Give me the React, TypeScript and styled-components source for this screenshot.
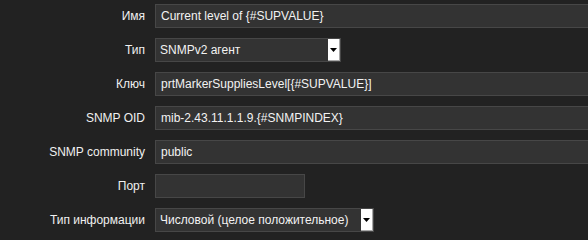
import React from 'react';
import styled, { createGlobalStyle } from 'styled-components';

const GlobalStyle = createGlobalStyle`
  html, body {
    margin: 0;
    padding: 0;
    background: #222222;
    overflow: hidden;
  }
  body {
    font-family: "Liberation Sans", Arial, sans-serif;
    font-size: 12px;
    color: #f0f0f0;
  }
`;

type Field =
  | { label: string; kind: 'text'; value: string; width?: number }
  | { label: string; kind: 'select'; value: string; width: number };

const fields: Field[] = [
  { label: 'Имя', kind: 'text', value: 'Current level of {#SUPVALUE}' },
  { label: 'Тип', kind: 'select', value: 'SNMPv2 агент', width: 186 },
  { label: 'Ключ', kind: 'text', value: 'prtMarkerSuppliesLevel[{#SUPVALUE}]' },
  { label: 'SNMP OID', kind: 'text', value: 'mib-2.43.11.1.1.9.{#SNMPINDEX}' },
  { label: 'SNMP community', kind: 'text', value: 'public' },
  { label: 'Порт', kind: 'text', value: '', width: 150 },
  { label: 'Тип информации', kind: 'select', value: 'Числовой (целое положительное)', width: 219 },
];

const App = () => {
  return (
    <>
      <GlobalStyle />
      <Form>
        {fields.map((f) => (
          <React.Fragment key={f.label}>
            <Label>{f.label}</Label>
            <Cell>
              {f.kind === 'text' ? (
                <TextBox $width={f.width}>{f.value}</TextBox>
              ) : (
                <SelectBox $width={f.width}>
                  <SelectValue>{f.value}</SelectValue>
                  <DropButton>
                    <svg width="7" height="4" viewBox="0 0 7 4">
                      <path d="M0 0h7L3.5 4z" fill="#000" />
                    </svg>
                  </DropButton>
                </SelectBox>
              )}
            </Cell>
          </React.Fragment>
        ))}
      </Form>
    </>
  );
};

const Form = styled.div`
  display: grid;
  grid-template-columns: 145px 1fr;
  column-gap: 10px;
  row-gap: 10px;
  padding-top: 4px;
  width: 660px;
`;

const Label = styled.div`
  display: flex;
  align-items: center;
  justify-content: flex-end;
  height: 24px;
  white-space: nowrap;
  color: #f0f0f0;
`;

const Cell = styled.div`
  display: flex;
  align-items: center;
`;

const TextBox = styled.div<{ $width?: number }>`
  box-sizing: border-box;
  width: ${(p) => (p.$width ? `${p.$width}px` : '100%')};
  height: 24px;
  padding: 0 5px;
  display: flex;
  align-items: center;
  background: #333333;
  border: 1px solid #474747;
  color: #f2f2f2;
  white-space: nowrap;
`;

const SelectBox = styled.div<{ $width: number }>`
  box-sizing: border-box;
  width: ${(p) => p.$width}px;
  height: 24px;
  display: flex;
  align-items: stretch;
  background: #333333;
  border: 1px solid #474747;
  color: #f2f2f2;
`;

const SelectValue = styled.div`
  flex: 1;
  display: flex;
  align-items: center;
  padding-left: 4px;
  white-space: nowrap;
  overflow: hidden;
`;

const DropButton = styled.div`
  box-sizing: border-box;
  width: 12px;
  display: flex;
  align-items: center;
  justify-content: center;
  background: #ffffff;
  border-right: 1px solid #a8a8a8;
  border-bottom: 1px solid #a8a8a8;
  padding-top: 1px;
`;

export default App;
